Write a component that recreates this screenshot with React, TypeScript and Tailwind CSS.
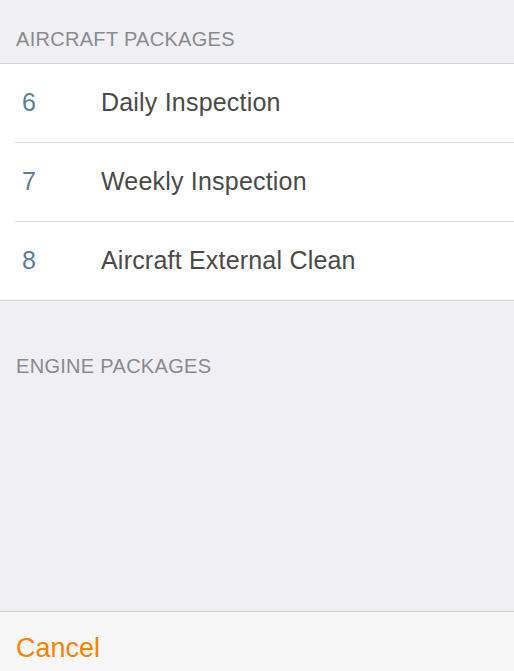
export default function App() {
  const aircraft = [
    { num: "6", name: "Daily Inspection" },
    { num: "7", name: "Weekly Inspection" },
    { num: "8", name: "Aircraft External Clean" },
  ];

  return (
    <div
      className="h-[671px] w-[514px] overflow-hidden bg-[#efeff4] flex flex-col"
      style={{ fontFamily: '"Liberation Sans", Arial, sans-serif' }}
    >
      <div className="flex-1">
        <div className="h-[63px] pt-[29px] pl-4 text-[20px] leading-[20px] tracking-[0.3px] text-[#8a8a8f]">
          AIRCRAFT PACKAGES
        </div>
        <div className="bg-white border-y border-[#d4d4d8]">
          {aircraft.map((item, i) => (
            <div key={item.num} className="pl-[15px]">
              <div
                className={
                  "h-[78px] flex items-center text-[25px] tracking-[0.2px] " +
                  (i < aircraft.length - 1 ? "border-b border-[#d9d9dc] h-[79px]" : "")
                }
              >
                <span className="w-[86px] pl-[7px] text-[#5a7f97]">{item.num}</span>
                <span className="text-[#4a4a4a]">{item.name}</span>
              </div>
            </div>
          ))}
        </div>
        <div className="mt-[55px] pl-4 text-[20px] leading-[20px] tracking-[0.3px] text-[#8a8a8f]">
          ENGINE PACKAGES
        </div>
      </div>
      <div className="h-[60px] border-t border-[#cfcfd4] bg-[#f7f7f7] pt-[23px] pl-4">
        <span className="text-[27px] leading-[27px] text-[#ff8200]">Cancel</span>
      </div>
    </div>
  );
}
